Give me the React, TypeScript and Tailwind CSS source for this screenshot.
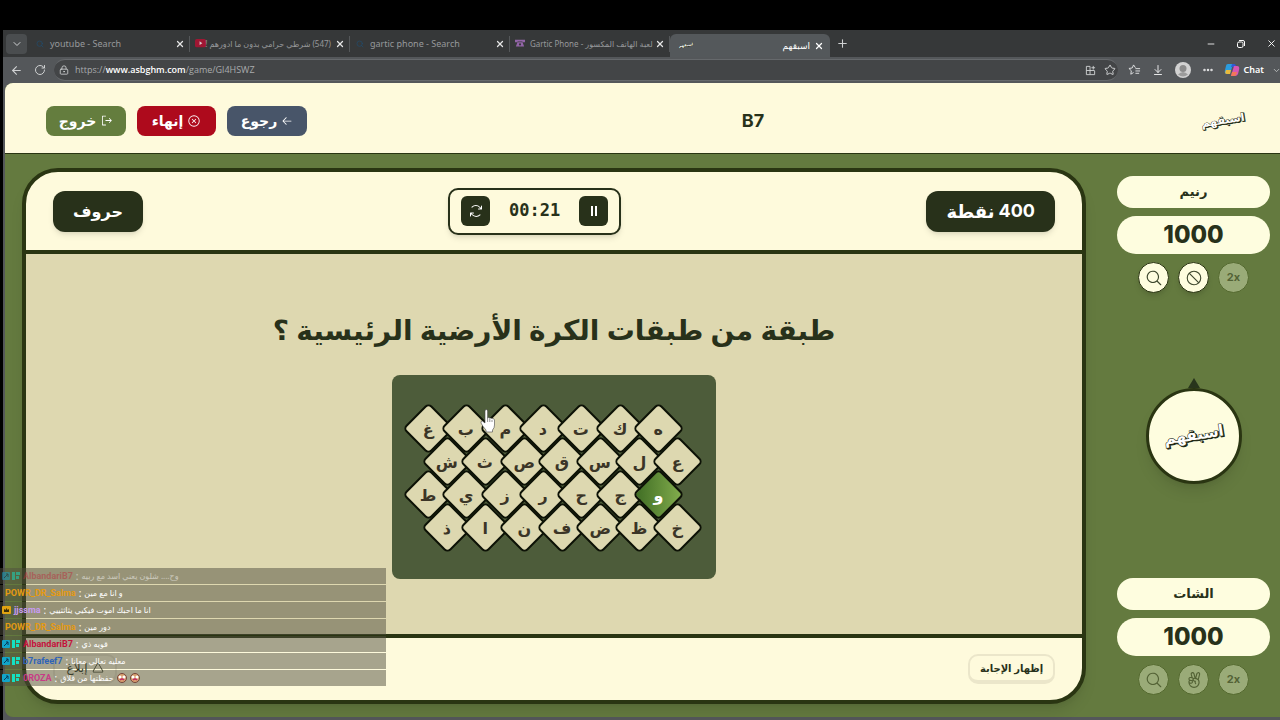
import type { ReactNode } from 'react';
import {
  PiArrowLeft,
  PiArrowsClockwise,
  PiHandPeace,
  PiMagnifyingGlass,
  PiProhibit,
  PiSignOut,
  PiTriangle,
  PiXCircle,
} from 'react-icons/pi';
import {
  ArrowDownToLine,
  ArrowLeft,
  ChevronDown,
  Ellipsis,
  LockKeyhole,
  Minus,
  Plus,
  RotateCw,
  Search,
  Star,
  X,
} from 'lucide-react';

const rows = [
  ['غ', 'ب', 'م', 'د', 'ت', 'ك', 'ه'],
  ['ش', 'ث', 'ص', 'ق', 'س', 'ل', 'ع'],
  ['ط', 'ي', 'ز', 'ر', 'ح', 'ج', 'و'],
  ['ذ', 'ا', 'ن', 'ف', 'ض', 'ظ', 'خ'],
];

const messages = [
  { name: 'AlbandariB7', color: 'text-[#b8323f]', text: 'وح.... شلون يعني اسد مع ربيه', badges: 2, faded: true },
  { name: 'POWR_DR_Salma', color: 'text-[#e59a13]', text: 'و انا مع مين', badges: 0 },
  { name: 'jjssma', color: 'text-[#c79bf2]', text: 'انا ما احبك اموت فيكيي يثاثثييي', badges: 1 },
  { name: 'POWR_DR_Salma', color: 'text-[#e59a13]', text: 'دور مين', badges: 0 },
  { name: 'AlbandariB7', color: 'text-[#c4123c]', text: 'قويه ذي', badges: 2 },
  { name: 'b7rafeef7', color: 'text-[#2e63b8]', text: 'معليه تعالي معانا', badges: 2 },
  { name: '0ROZA', color: 'text-[#c83b86]', text: 'حفظتها من قلاق', badges: 2, emotes: true },
];

function Logo({ className }: { className: string }) {
  return (
    <svg viewBox="0 0 60 32" className={className} role="img" aria-label="اسبقهم">
      <g transform="rotate(-9 30 16)" fontFamily="DejaVu Sans, sans-serif" fontWeight="700" fontSize="14" textAnchor="middle">
        <text x="31" y="21" fill="#222a14" stroke="#222a14" strokeWidth="1">اسبقهم</text>
        <text x="30" y="20" fill="#ffffff" stroke="#222a14" strokeWidth="1" paintOrder="stroke">اسبقهم</text>
      </g>
    </svg>
  );
}

function Tab({ icon, title, small, rtl }: { icon: ReactNode; title: string; small?: boolean; rtl?: boolean }) {
  return (
    <div className="flex h-4 w-40 shrink-0 items-center gap-1 border-r border-[#55585a] pr-1 pl-1">
      <span className="flex w-3 shrink-0 justify-center">{icon}</span>
      <span
        dir={rtl ? 'rtl' : 'ltr'}
        className={`min-w-0 flex-1 text-left whitespace-nowrap text-[#96999b] ${small ? 'text-[8px]' : 'text-[9px]'}`}
      >
        {title}
      </span>
      <button aria-label="Close tab" className="text-[#e4e5e6]">
        <X size={10} strokeWidth={3} />
      </button>
    </div>
  );
}

function BrowserChrome() {
  return (
    <div className="text-[#cfd1d2]">
      <div className="flex h-[27px] items-center bg-[#363839]">
        <button aria-label="Tab actions" className="mr-[3px] ml-[3px] flex h-5 w-[21px] items-center justify-center rounded bg-[#4a4d4f]">
          <ChevronDown size={12} />
        </button>
        <Tab icon={<Search size={8} className="text-[#1f4d70]" />} title="youtube - Search" />
        <Tab
          icon={
            <svg viewBox="0 0 12 9" className="w-[11px]">
              <rect width="12" height="9" rx="2" fill="#a01733" />
              <path d="M5 2.500 8 4.500 5 6.500Z" fill="#d8c4c8" />
            </svg>
          }
          title="(547) شرطي حرامي بدون ما ادورهم !"
          small
          rtl
        />
        <Tab icon={<Search size={8} className="text-[#1f4d70]" />} title="gartic phone - Search" />
        <Tab
          icon={
            <svg viewBox="0 0 12 10" className="w-[10px]" fill="#9365a8">
              <path d="M0 1h12v3H9V3H3v1H0zM3 4h6l2 5H1z" />
              <circle cx="6" cy="6.500" r="1.300" fill="#363839" />
            </svg>
          }
          title="Gartic Phone - لعبة الهاتف المكسور"
          small
        />
        <div className="mt-1 flex h-[23px] w-40 shrink-0 items-center justify-between rounded-t-md bg-[#54585b] pr-[6px] pl-2 text-white">
          <Logo className="w-4" />
          <span className="flex items-center gap-1 text-[9px]">
            اسبقهم
            <button aria-label="Close tab">
              <X size={10} strokeWidth={3} />
            </button>
          </span>
        </div>
        <button aria-label="New tab" className="ml-1.5">
          <Plus size={13} strokeWidth={2} />
        </button>
        <div className="mr-[3px] ml-auto flex items-center gap-5 text-white">
          <button aria-label="Minimize"><Minus size={10} strokeWidth={2} /></button>
          <button aria-label="Restore">
            <svg viewBox="0 0 10 10" className="w-[10px]" fill="none" stroke="currentColor">
              <rect x="1.500" y="3" width="5.500" height="5.500" rx="1.500" />
              <path d="M3 1.500h4a1.500 1.500 0 0 1 1.500 1.500v4" />
            </svg>
          </button>
          <button aria-label="Close"><X size={11} strokeWidth={2} /></button>
        </div>
      </div>
      <div className="flex h-[26px] items-center bg-[#54575a] pl-[7px]">
        <button aria-label="Back"><ArrowLeft size={13} strokeWidth={2} /></button>
        <button aria-label="Reload" className="ml-[11px]"><RotateCw size={12} strokeWidth={2} /></button>
        <div className="ml-2 flex h-[22px] min-w-0 flex-1 items-center rounded-full border-y border-[#66696c] bg-[#434547] pr-0.5 pl-[5px]">
          <LockKeyhole size={10} strokeWidth={2} />
          <span className="ml-1.5 flex-1 font-['Open_Sans'] text-[9px] text-[#a9abad]">
            https://<span className="font-semibold text-white">www.asbghm.com</span>/game/Gl4HSWZ
          </span>
          <svg viewBox="0 0 12 12" className="mr-2 w-[11px]" fill="none" stroke="currentColor">
            <path d="M5.500 1.500h-4v9h9v-4M1.500 6h9M5.500 1.500v9M9 1v4M7 3h4" />
          </svg>
          <Star size={12} strokeWidth={2} />
        </div>
        <div className="ml-[10px] flex items-center gap-[11px] text-[#e4e5e6]">
          <svg viewBox="0 0 14 12" className="w-[13px]" fill="none" stroke="currentColor" strokeLinejoin="round">
            <path d="M8 4 6 1 4.500 4.300 1 4.800 3.600 7.300 3 11 6 9.200" />
            <path d="M8 5h5M8 7.500h5M8 10h4" />
          </svg>
          <ArrowDownToLine size={12} strokeWidth={2} />
          <svg viewBox="0 0 16 16" className="w-4">
            <circle cx="8" cy="8" r="8" fill="#d2d2d2" />
            <circle cx="8" cy="6.500" r="3.500" fill="#8b8b8b" />
            <path d="M3 12.500q5-5 10 0-5 4-10 0" fill="#9c9c9c" />
          </svg>
          <Ellipsis size={12} strokeWidth={3} />
        </div>
        <button className="ml-[10px] flex items-center gap-1 text-[9px] font-semibold text-white">
          <svg viewBox="0 0 16 16" className="w-4">
            <path d="M4 2h5L6 12H3Q0 12 1 8L2 4Q2 2 4 2" fill="#2a9de0" />
            <path d="M2 8h5l-1 4H3q-3 0-1-4" fill="#e8b93c" />
            <path d="M8 2h2q2 0 2 3H7z" fill="#3159d6" />
            <path d="M10 4h3q3 0 2 4l-1 4q-1 2-3 2H7z" fill="#d656b4" />
            <path d="M8 10h5l-1 3q-1 1-2 1H7z" fill="#f17858" />
          </svg>
          Chat
        </button>
        <ChevronDown size={9} className="mr-[-1px] ml-2 shrink-0" />
      </div>
    </div>
  );
}

function Header() {
  return (
    <header className="flex h-[71px] items-center justify-between rounded-tl-lg border-b border-[#2a3512] bg-[#fefadc] pt-[5px] pr-[33px] pl-[41px]">
      <div className="flex gap-[11px] text-sm font-bold text-white">
        <button className="flex h-[30px] w-20 items-center justify-center gap-1 rounded-lg bg-[#647d3e]">
          خروج
          <PiSignOut size={13} />
        </button>
        <button className="flex h-[30px] w-[79px] items-center justify-center gap-1 rounded-lg bg-[#ae0a1c]">
          إنهاء
          <PiXCircle size={14} />
        </button>
        <button className="flex h-[30px] w-20 items-center justify-center gap-1 rounded-lg bg-[#485569]">
          رجوع
          <PiArrowLeft size={12} />
        </button>
      </div>
      <h1 className="font-[Inter] text-lg font-bold text-[#28311a]">B7</h1>
      <Logo className="w-12" />
    </header>
  );
}

function Board() {
  return (
    <div dir="ltr" className="flex h-[204px] w-[324px] flex-col items-center justify-center rounded-lg bg-[#4d5c3a]">
      <div className="w-[290px] pt-[2px]">
        {rows.map((row, r) => (
          <div key={r} className={`grid w-[269px] grid-cols-7 ${r % 2 ? 'ml-[19px]' : ''}`}>
            {row.map((letter) => (
              <div key={letter} className="flex h-[33px] items-center justify-center">
                <button
                  className={`flex size-[37px] shrink-0 rotate-45 items-center justify-center rounded-[5px] border-2 border-[#0d1206] text-base leading-5 font-bold ${
                    letter === 'و'
                      ? 'bg-linear-to-tr from-[#3f6d24] to-[#83ad4d] text-white'
                      : 'bg-[#ddd8b0] text-[#3b3527]'
                  }`}
                >
                  <span className="-rotate-45">{letter}</span>
                </button>
              </div>
            ))}
          </div>
        ))}
      </div>
    </div>
  );
}

function GameCard() {
  return (
    <section className="flex min-w-0 flex-1 flex-col overflow-hidden rounded-[36px] border-4 border-[#2a3512] bg-[#fefadc] shadow-lg">
      <div className="flex h-[82px] items-center justify-between border-b-4 border-[#2a3512] px-[27px]">
        <span className="flex h-[41px] w-[90px] items-center justify-center rounded-xl bg-[#28311a] text-base font-bold text-white shadow-md">
          حروف
        </span>
        <div className="flex h-[47px] w-[173px] items-center justify-between rounded-[10px] border-2 border-[#28311a] px-[11px] shadow-md">
          <button aria-label="إعادة" className="flex h-[30px] w-[29px] items-center justify-center rounded-md bg-[#28311a] text-white">
            <PiArrowsClockwise size={16} />
          </button>
          <span className="font-['DejaVu_Sans_Mono'] text-[17px] font-bold text-[#28311a]">00:21</span>
          <button aria-label="إيقاف" className="flex h-[30px] w-[29px] items-center justify-center rounded-md bg-[#28311a] text-white">
            <svg viewBox="0 0 14 14" className="w-[14px]" fill="currentColor">
              <path d="M4 2h2v10H4zM8 2h2v10H8z" />
            </svg>
          </button>
        </div>
        <span dir="rtl" className="flex h-[41px] items-center gap-1 rounded-xl bg-[#28311a] px-5 text-lg font-bold text-white shadow-md">
          <span className="font-[Inter]">400</span> نقطة
        </span>
      </div>
      <div dir="rtl" className="flex flex-1 flex-col items-center justify-center gap-[26px] bg-[#ded8b0]">
        <h2 className="text-[28px] leading-10 font-bold text-[#28311a]">طبقة من طبقات الكرة الأرضية الرئيسية ؟</h2>
        <Board />
      </div>
      <div className="flex h-[66px] items-center justify-between border-t-4 border-[#2a3512] px-[27px] text-[#28311a]">
        <button className="flex h-[30px] w-16 items-center justify-center gap-1 rounded-[10px] border-2 border-b-4 border-[#ebe6ca] text-xs font-medium">
          إبلاغ
          <PiTriangle size={12} />
        </button>
        <button className="flex h-[30px] w-[87px] items-center justify-center rounded-[10px] border-2 border-b-4 border-[#ebe6ca] text-[10px] font-bold">
          إظهار الإجابة
        </button>
      </div>
    </section>
  );
}

function Power({ label, used, children }: { label: string; used?: boolean; children: ReactNode }) {
  return (
    <button
      aria-label={label}
      className={`flex size-[31px] items-center justify-center rounded-full border font-[Inter] text-[11px] font-bold ${
        used
          ? 'border-[#54692f] bg-[#9aab78] text-[#536235]'
          : 'border-[#2a3512] bg-[#fefddf] text-[#3d472d] shadow-md'
      }`}
    >
      {children}
    </button>
  );
}

function Team({ name, score, children }: { name: string; score: number; children: ReactNode }) {
  return (
    <div className="flex flex-col items-center text-[#28311a]">
      <div className="mb-2 flex h-8 w-full items-center justify-center rounded-full bg-[#fefddf] text-[13px] font-bold">{name}</div>
      <div className="mb-2 flex h-[38px] w-full items-center justify-center rounded-full bg-[#fefddf] font-[Inter] text-2xl font-extrabold">
        {score}
      </div>
      <div className="flex gap-[9px]">{children}</div>
    </div>
  );
}

function Sidebar() {
  return (
    <aside className="mr-[10px] ml-[31px] flex w-[153px] shrink-0 flex-col items-center justify-between pt-2 pb-[9px]">
      <div className="w-full">
        <Team name="رنيم" score={1000}>
          <Power label="بحث"><PiMagnifyingGlass size={18} /></Power>
          <Power label="منع"><PiProhibit size={18} /></Power>
          <Power label="مضاعفة" used>2x</Power>
        </Team>
      </div>
      <div className="flex flex-col items-center pb-[9px]">
        <svg viewBox="0 0 12 10" className="w-3">
          <path d="M6 0 12 10H0z" fill="#28351c" />
        </svg>
        <div className="flex size-24 items-center justify-center rounded-full border-[3px] border-[#2a3512] bg-[#fefddf] shadow-lg">
          <Logo className="w-[66px]" />
        </div>
      </div>
      <div className="w-full">
        <Team name="الشات" score={1000}>
          <Power label="بحث" used><PiMagnifyingGlass size={18} /></Power>
          <Power label="سلام" used><PiHandPeace size={18} /></Power>
          <Power label="مضاعفة" used>2x</Power>
        </Team>
      </div>
    </aside>
  );
}

function Emote() {
  return (
    <svg viewBox="0 0 10 10" className="w-[10px]">
      <circle cx="5" cy="5" r="4.500" fill="#d8a070" stroke="#75463b" />
      <circle cx="3" cy="4" r="1.500" fill="#fff" />
      <circle cx="7" cy="4" r="1.500" fill="#fff" />
      <path d="M3 7q2-2 4 0" fill="none" stroke="#c22861" strokeWidth="1.500" />
    </svg>
  );
}

function ChatOverlay() {
  return (
    <ul className="absolute bottom-[34px] left-0 flex w-[386px] flex-col gap-px">
      {messages.map((m, i) => (
        <li key={i} className="flex h-4 items-center bg-[#4f4e3e]/50 pl-[5px] text-[10px] text-white">
          <span className={`flex items-center gap-[3px] ${m.faded ? 'opacity-50' : ''}`}>
            {m.badges === 2 && (
              <svg viewBox="0 0 18 8" className="-ml-[3px] w-[18px]">
                <rect width="8" height="8" rx="1" fill="#12a5c9" />
                <path d="M2 6 6 2M4 2h2v3" stroke="#073a5a" fill="none" />
                <path d="M10 0h3v8h-3zM14 0h4v3h-4zM14 4h3v3h-3z" fill="#14e0c2" />
              </svg>
            )}
            {m.badges === 1 && (
              <svg viewBox="0 0 9 8" className="-ml-[3px] w-[9px]">
                <rect width="9" height="8" rx="1" fill="#e0a312" />
                <path d="M2 6V3l1.500 1L4.500 2l1 2L7 3v3z" fill="#3c2f0a" />
              </svg>
            )}
            <span className={`font-[Roboto] text-[9px] leading-4 font-bold ${m.color}`}>{m.name}</span>
            <span>:</span>
            <span dir="rtl" className="text-[8px]">{m.text}</span>
            {m.emotes && (
              <>
                <Emote />
                <Emote />
              </>
            )}
          </span>
        </li>
      ))}
    </ul>
  );
}

function HandCursor() {
  return (
    <svg viewBox="0 0 16 24" className="absolute top-[409px] left-[480px] w-4">
      <path
        d="M5 2q0-1.500 1.300-1.500T7.600 2v7q1-1 2.200.2 1.200-.8 2.200.4 2-.6 2.500 1.400V16q0 3-2 5v2H6v-2Q3 18 1 14q-.5-2 1.300-2L5 14z"
        fill="#fff"
        stroke="#444"
        strokeWidth=".6"
      />
      <path d="M7.600 9v4M9.800 10v3M12 11v2" stroke="#666" strokeWidth=".7" />
    </svg>
  );
}

export default function App() {
  return (
    <div className="relative flex min-h-screen flex-col overflow-hidden bg-black pt-[30px] pl-[3px] font-['Noto_Sans','DejaVu_Sans',sans-serif]">
      <BrowserChrome />
      <div className="flex flex-1 flex-col bg-[#54575a] pb-[3px] pl-0.5">
        <div className="flex flex-1 flex-col rounded-tl-lg rounded-bl-lg bg-[#647a3f]">
          <Header />
          <main className="flex flex-1 pt-[14px] pb-[13px] pl-[17px]">
            <GameCard />
            <Sidebar />
          </main>
        </div>
      </div>
      <ChatOverlay />
      <HandCursor />
    </div>
  );
}
